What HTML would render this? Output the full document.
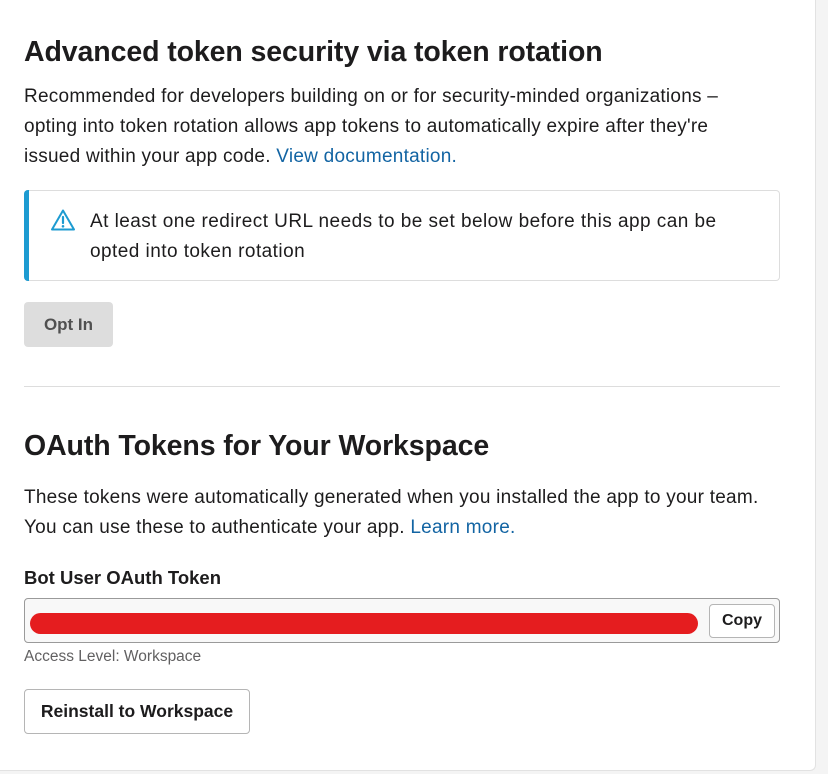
<!DOCTYPE html>
<html><head><meta charset="utf-8"><style>
body{margin:0;width:828px;height:774px;background:#f4f4f4;font-family:"Liberation Sans",sans-serif;color:#1d1c1d;overflow:hidden;position:relative}
.panel{position:absolute;left:0;top:-10px;width:815px;height:780px;background:#fff;border-right:1px solid #e2e2e2;border-bottom:1px solid #e2e2e2;border-bottom-right-radius:6px}
.a{position:absolute;white-space:nowrap}
.p{font-size:19px;line-height:30px;letter-spacing:0.25px}
a{color:#1264a3;text-decoration:none}
</style></head><body>
<div class="panel"></div>
<div class="a" style="left:24px;top:36px;font-size:28.5px;font-weight:bold;letter-spacing:-0.1px">Advanced token security via token rotation</div>
<div class="a p" style="left:24px;top:82px">Recommended for developers building on or for security-minded organizations –<br>opting into token rotation allows app tokens to automatically expire after they're<br>issued within your app code. <a>View documentation.</a></div>
<div class="a" style="left:24px;top:190px;width:756px;height:91px;border:1px solid #ddd;border-left:none;border-radius:4px;box-sizing:border-box"></div>
<div class="a" style="left:24px;top:190px;width:5px;height:91px;background:#1d9bd1;border-radius:4px 0 0 4px"></div>
<svg class="a" style="left:50px;top:208px" width="26" height="24" viewBox="0 0 26 24"><path d="M13 2.5 L24 21.5 H2 Z" fill="none" stroke="#1d9bd1" stroke-width="2" stroke-linejoin="round"/><path d="M13 9v6" stroke="#1d9bd1" stroke-width="2.2" stroke-linecap="round"/><circle cx="13" cy="18.3" r="1.3" fill="#1d9bd1"/></svg>
<div class="a p" style="left:90px;top:207px;letter-spacing:0.45px">At least one redirect URL needs to be set below before this app can be<br>opted into token rotation</div>
<div class="a" style="left:24px;top:302px;width:89px;height:45px;background:#dddddd;border-radius:4px;font-size:17px;font-weight:bold;color:#505050;line-height:45px;text-align:center">Opt In</div>
<div class="a" style="left:24px;top:386px;width:756px;height:1px;background:#ddd"></div>
<div class="a" style="left:24px;top:430px;font-size:28.5px;font-weight:bold;letter-spacing:-0.1px">OAuth Tokens for Your Workspace</div>
<div class="a p" style="left:24px;top:483px">These tokens were automatically generated when you installed the app to your team.<br>You can use these to authenticate your app. <a>Learn more.</a></div>
<div class="a" style="left:24px;top:567px;font-size:18.5px;font-weight:bold">Bot User OAuth Token</div>
<div class="a" style="left:24px;top:598px;width:756px;height:45px;background:#f8f8f8;border:1px solid #9a9a9a;border-radius:4px;box-sizing:border-box"></div>
<div class="a" style="left:30px;top:613px;width:668px;height:21px;background:#e51d1f;border-radius:11px"></div>
<div class="a" style="left:709px;top:604px;width:66px;height:34px;background:#fff;border:1px solid #b5b5b5;border-radius:4px;box-sizing:border-box;font-size:16px;font-weight:bold;line-height:32px;text-align:center">Copy</div>
<div class="a" style="left:24px;top:648px;font-size:15.5px;color:#616061">Access Level: Workspace</div>
<div class="a" style="left:24px;top:689px;width:226px;height:45px;background:#fff;border:1px solid #b5b5b5;border-radius:4px;box-sizing:border-box;font-size:17.5px;font-weight:bold;line-height:43px;text-align:center">Reinstall to Workspace</div>
</body></html>
